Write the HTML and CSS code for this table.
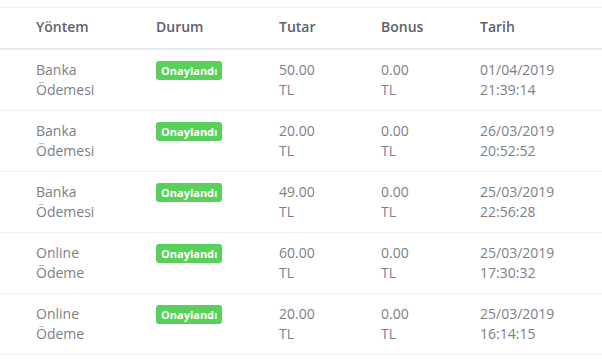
FILE: index.html
```html
<!DOCTYPE html>
<html lang="tr">
<head>
<meta charset="utf-8">
<link rel="stylesheet" href="styles.css">
</head>
<body>
<div class="table">
  <div class="row head">
    <div>Yöntem</div><div>Durum</div><div>Tutar</div><div>Bonus</div><div>Tarih</div>
  </div>
  <div class="row">
    <div><span class="l">Banka</span><span class="l">Ödemesi</span></div>
    <div><span class="badge">Onaylandı</span></div>
    <div><span class="l">50.00</span><span class="l">TL</span></div>
    <div><span class="l">0.00</span><span class="l">TL</span></div>
    <div><span class="l">01/04/2019</span><span class="l">21:39:14</span></div>
  </div>
  <div class="row">
    <div><span class="l">Banka</span><span class="l">Ödemesi</span></div>
    <div><span class="badge">Onaylandı</span></div>
    <div><span class="l">20.00</span><span class="l">TL</span></div>
    <div><span class="l">0.00</span><span class="l">TL</span></div>
    <div><span class="l">26/03/2019</span><span class="l">20:52:52</span></div>
  </div>
  <div class="row">
    <div><span class="l">Banka</span><span class="l">Ödemesi</span></div>
    <div><span class="badge">Onaylandı</span></div>
    <div><span class="l">49.00</span><span class="l">TL</span></div>
    <div><span class="l">0.00</span><span class="l">TL</span></div>
    <div><span class="l">25/03/2019</span><span class="l">22:56:28</span></div>
  </div>
  <div class="row">
    <div><span class="l">Online</span><span class="l">Ödeme</span></div>
    <div><span class="badge">Onaylandı</span></div>
    <div><span class="l">60.00</span><span class="l">TL</span></div>
    <div><span class="l">0.00</span><span class="l">TL</span></div>
    <div><span class="l">25/03/2019</span><span class="l">17:30:32</span></div>
  </div>
  <div class="row">
    <div><span class="l">Online</span><span class="l">Ödeme</span></div>
    <div><span class="badge">Onaylandı</span></div>
    <div><span class="l">20.00</span><span class="l">TL</span></div>
    <div><span class="l">0.00</span><span class="l">TL</span></div>
    <div><span class="l">25/03/2019</span><span class="l">16:14:15</span></div>
  </div>
</div>
</body>
</html>
```
FILE: styles.css
```css
html, body {
  margin: 0;
  padding: 0;
  background: #ffffff;
}
body {
  font-family: "Open Sans", "Liberation Sans", sans-serif;
  font-size: 14px;
  color: #7b7f87;
}
.table {
  margin-top: 7px;
  border-top: 1px solid #eceef1;
}
.row {
  display: grid;
  grid-template-columns: 120px 123px 102px 99px 1fr;
  padding: 10px 0 10px 36px;
  line-height: 20px;
  border-bottom: 1px solid #eceef1;
}
.row > div {
  display: flex;
  flex-direction: column;
  align-items: flex-start;
}
.head {
  padding-top: 9px;
  padding-bottom: 11px;
  border-bottom: 2px solid #e6eaef;
  font-weight: 600;
  color: #5d616b;
}
.l {
  display: block;
}
.badge {
  margin-top: 1px;
  height: 19px;
  line-height: 19px;
  padding: 0 5px;
  background: #58d15b;
  color: #ffffff;
  border-radius: 3px;
  font-size: 11px;
  font-weight: 700;
}
```
